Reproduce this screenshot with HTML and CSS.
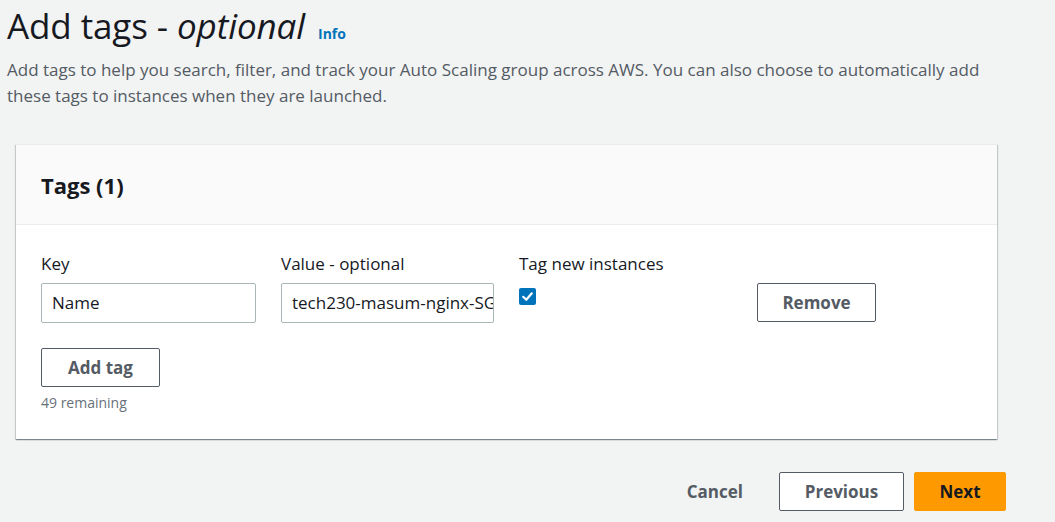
FILE: index.html
```html
<!DOCTYPE html>
<html lang="en">
<head>
<meta charset="utf-8">
<title>Add tags</title>
<link rel="stylesheet" href="styles.css">
</head>
<body>
<div class="page">
  <header class="intro">
    <h1 class="title">Add tags - <em>optional</em> <a class="info" href="#">Info</a></h1>
    <p class="desc">Add tags to help you search, filter, and track your Auto Scaling group across AWS. You can also choose to automatically add these tags to instances when they are launched.</p>
  </header>

  <section class="card">
    <div class="card-head">
      <h2 class="card-title">Tags (1)</h2>
    </div>
    <div class="card-body">
      <div class="tag-row">
        <div class="field">
          <div class="label">Key</div>
          <div class="input">Name</div>
        </div>
        <div class="field">
          <div class="label">Value - optional</div>
          <div class="input">tech230-masum-nginx-SG-instance</div>
        </div>
        <div class="field">
          <div class="label">Tag new instances</div>
          <div class="check-wrap">
            <span class="checkbox">
              <svg viewBox="0 0 17 17" width="17" height="17"><path d="M4.2 8.8 L7.3 11.8 L12.8 5.3" fill="none" stroke="#fff" stroke-width="2.2" stroke-linecap="round" stroke-linejoin="round"/></svg>
            </span>
          </div>
        </div>
        <div class="field field-btn">
          <button class="btn">Remove</button>
        </div>
      </div>
      <button class="btn btn-add">Add tag</button>
      <div class="remaining">49 remaining</div>
    </div>
  </section>

  <footer class="actions">
    <button class="btn-link">Cancel</button>
    <button class="btn btn-prev">Previous</button>
    <button class="btn btn-primary">Next</button>
  </footer>
</div>
</body>
</html>
```

FILE: styles.css
```css
* { box-sizing: border-box; }
html, body { margin: 0; padding: 0; }
body {
  background: #f2f3f3;
  font-family: "Open Sans", "Noto Sans", "Liberation Sans", sans-serif;
  color: #16191f;
  width: 1055px;
  height: 522px;
  overflow: hidden;
}
.page {
  padding: 4px 0 0 7px;
}
.title {
  margin: 0;
  font-size: 35px;
  line-height: 44px;
  font-weight: 400;
  letter-spacing: -0.1px;
}
.title em { font-style: italic; }
.info {
  font-size: 14px;
  font-weight: 700;
  color: #0073bb;
  text-decoration: none;
  margin-left: 4px;
  letter-spacing: 0;
}
.desc {
  margin: 1px 0 0 0;
  width: 990px;
  font-size: 17px;
  line-height: 26px;
  color: #545b64;
}
.card {
  margin: 35px 0 0 9px;
  width: 981px;
  background: #fff;
  border-top: 1px solid #eaeded;
  box-shadow: 0 1px 1px 0 rgba(0,28,36,0.3), 1px 1px 1px 0 rgba(0,28,36,0.15), -1px 1px 1px 0 rgba(0,28,36,0.15);
}
.card-head {
  height: 80px;
  background: #fafafa;
  border-bottom: 1px solid #eaeded;
  display: flex;
  align-items: center;
  padding: 0 25px;
}
.card-title {
  margin: 0;
  font-size: 22px;
  font-weight: 700;
  line-height: 28px;
}
.card-body {
  padding: 28px 25px 26px 25px;
}
.tag-row {
  display: grid;
  grid-template-columns: 215px 213px 213px 119px;
  column-gap: 25px;
}
.field { display: flex; flex-direction: column; }
.label {
  font-size: 17px;
  line-height: 22px;
  margin-bottom: 8px;
}
.input {
  height: 40px;
  border: 1px solid #aab7b8;
  border-radius: 2px;
  background: #fff;
  padding: 0 10px;
  font-size: 17px;
  line-height: 38px;
  white-space: nowrap;
  overflow: hidden;
}
.check-wrap { height: 40px; padding-top: 5px; }
.checkbox {
  display: block;
  width: 17px;
  height: 17px;
  border-radius: 2px;
  background: #0073bb;
}
.checkbox svg { display: block; }
.field-btn { justify-content: flex-end; padding-bottom: 1px; }
.btn {
  font-family: inherit;
  height: 39px;
  background: #fff;
  border: 1px solid #545b64;
  border-radius: 2px;
  color: #545b64;
  font-size: 17px;
  font-weight: 700;
  padding: 0;
  cursor: pointer;
}
.btn-add {
  display: block;
  width: 119px;
  margin-top: 25px;
}
.remaining {
  margin-top: 6px;
  font-size: 14px;
  line-height: 20px;
  color: #687078;
}
.actions {
  display: flex;
  justify-content: flex-end;
  align-items: center;
  width: 999px;
  margin-top: 33px;
  gap: 10px;
}
.btn-link {
  font-family: inherit;
  background: none;
  border: none;
  color: #545b64;
  font-size: 17px;
  font-weight: 700;
  height: 39px;
  padding: 0 26px 0 16px;
}
.btn-prev { width: 125px; }
.btn-primary {
  width: 92px;
  background: #ff9900;
  border-color: #ff9900;
  color: #16191f;
}
```
